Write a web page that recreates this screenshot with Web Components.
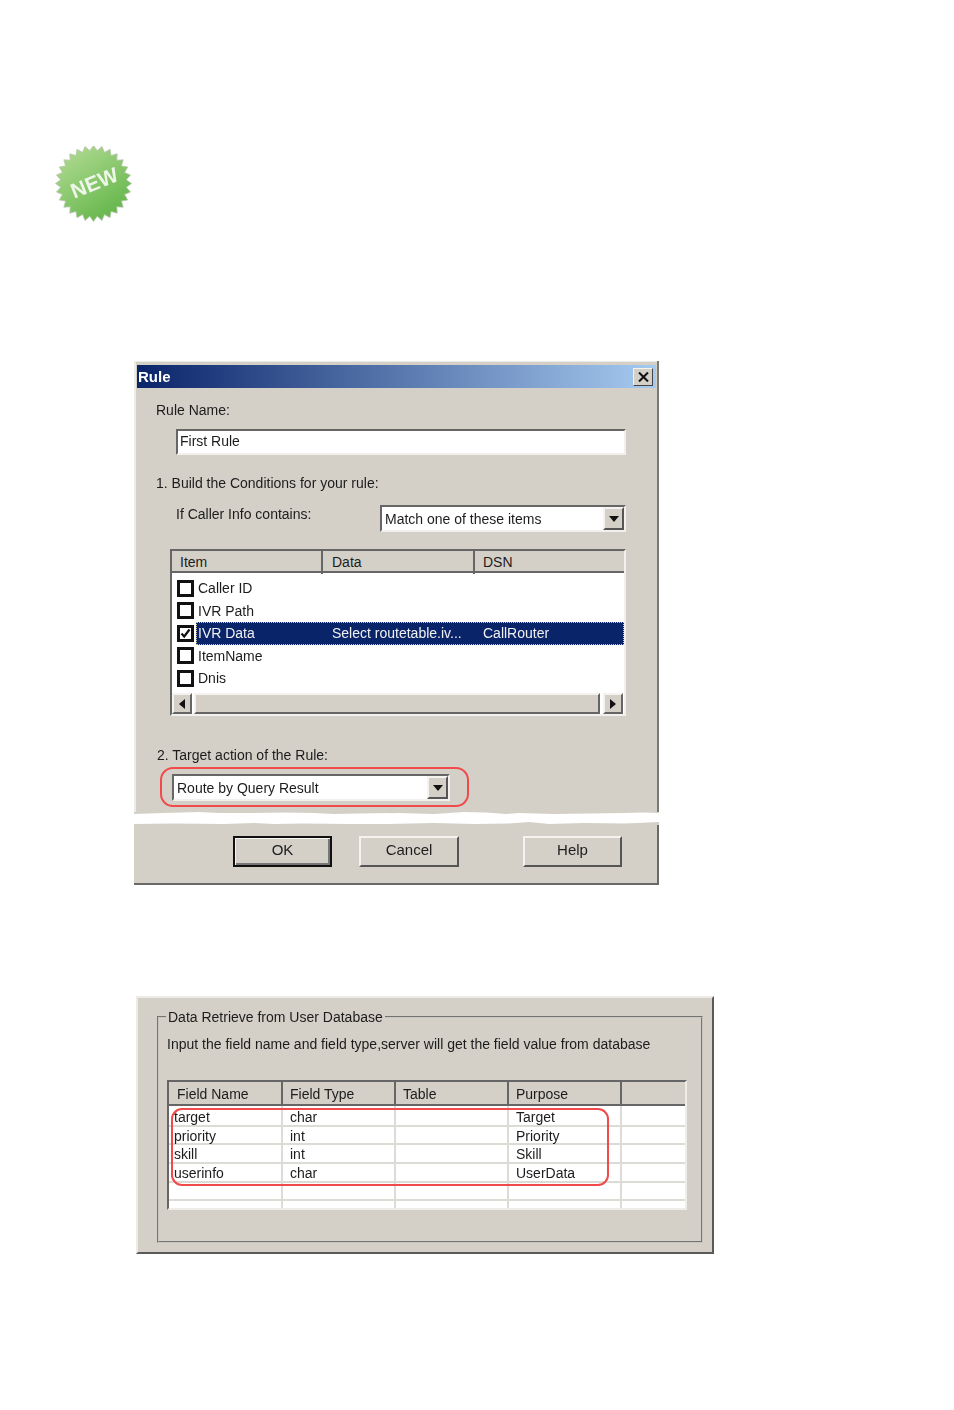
<!DOCTYPE html>
<html>
<head>
<meta charset="utf-8">
<title>Rule</title>
<style>
    html, body { margin: 0; background: #fff; }
    body { display: flex; flex-direction: column; align-items: flex-start; font-family: "Liberation Sans", Arial, sans-serif; }
    new-badge { margin: 146px 0 0 55px; }
    rule-dialog { margin: 139px 0 0 134px; filter: blur(.35px); }
    data-panel { margin: 111px 0 0 136px; filter: blur(.35px); }
</style>
</head>
<body>
<new-badge></new-badge>
<rule-dialog></rule-dialog>
<data-panel></data-panel>

<script>
// shared look of the scanned win32 controls
var base_css = `
    * { box-sizing: border-box; }
    :host { display: block; box-sizing: border-box; font: 14px "Liberation Sans", Arial, sans-serif; color: #1c1c1c; }
`;
var arrow_down = `<svg width="10" height="6" viewBox="0 0 10 6"><path d="M0 0H10L5 6Z" fill="#111"/></svg>`;

// ---- NEW badge
class NewBadge extends HTMLElement {
    constructor(){
        super();
        this.attachShadow({mode:"open"});
    }
    connectedCallback(){
        var pts = [];
        var spikes = 28;
        for (var i = 0; i < spikes * 2; i++){
            var r = i % 2 ? 33 : 38;
            var a = Math.PI * i / spikes;
            pts.push((38.5 + r * Math.cos(a)).toFixed(1) + "," + (37.5 + r * Math.sin(a)).toFixed(1));
        }
        this.shadowRoot.innerHTML = `
        <style>
            :host { display: block; width: 77px; height: 76px; }
            svg { display: block; filter: blur(.7px); }
            text { font: bold 21px "Liberation Sans", Arial, sans-serif; fill: #eef6ea; }
        </style>
        <svg width="77" height="76" viewBox="0 0 77 76">
            <defs>
                <linearGradient id="g" x1="0.2" y1="0.05" x2="0.8" y2="0.95">
                    <stop offset="0" stop-color="#add98f"/>
                    <stop offset="1" stop-color="#62b548"/>
                </linearGradient>
            </defs>
            <polygon points="${pts.join(" ")}" fill="url(#g)" stroke="#b8c4ae" stroke-width=".8"/>
            <text x="39.5" y="44.5" text-anchor="middle" transform="rotate(-22 38.5 37.5)">NEW</text>
        </svg>`;
    }
}

// ---- sunken text box
class EditBox extends HTMLElement {
    constructor(){
        super();
        this.attachShadow({mode:"open"});
        this.shadowRoot.innerHTML = `
        <style>
            ${base_css}
            :host { height: 26px; background: #fff; border: 2px solid; border-color: #666 #f1f0ec #f1f0ec #666; padding-left: 2px; line-height: 21px; }
        </style>
        <slot></slot>`;
    }
}

// ---- drop down
class ComboBox extends HTMLElement {
    constructor(){
        super();
        this.attachShadow({mode:"open"});
        this.shadowRoot.innerHTML = `
        <style>
            ${base_css}
            :host { height: 27px; background: #fff; border: 2px solid; border-color: #666 #f1f0ec #f1f0ec #666; }
            .in { height: 100%; display: flex; justify-content: space-between; padding-left: 3px; line-height: 24px; }
            .btn { width: 21px; height: 100%; background: #d4d0c8; border: 2px solid; border-color: #f4f3ef #555 #555 #f4f3ef; display: flex; align-items: center; justify-content: center; }
        </style>
        <div class="in"><span><slot></slot></span><div class="btn">${arrow_down}</div></div>`;
    }
}

// ---- push button
class PushButton extends HTMLElement {
    constructor(){
        super();
        this.attachShadow({mode:"open"});
        this.shadowRoot.innerHTML = `
        <style>
            ${base_css}
            :host { height: 31px; background: #d4d0c8; border: 2px solid; border-color: #f4f3ef #555 #555 #f4f3ef; text-align: center; line-height: 24px; font-size: 15px; }
            :host([default]) { border-color: #111; box-shadow: inset 1px 1px 0 #f4f3ef, inset -2px -2px 0 #777; }
        </style>
        <slot></slot>`;
    }
}

// ---- list view row with checkbox
class CheckRow extends HTMLElement {
    constructor(){
        super();
        this.attachShadow({mode:"open"});
    }
    connectedCallback(){
        var on = this.hasAttribute("checked");
        this.shadowRoot.innerHTML = `
        <style>
            ${base_css}
            :host { height: 22.5px; display: grid; grid-template-columns: 23px 133px 151px 1fr; align-items: center; line-height: 22px; padding-left: 4px; }
            .box { width: 17px; height: 17px; border: 3px solid #111; background: #fff; margin-left: 1px; display: block; }
            .box svg { display: block; }
            .label { margin-left: -1px; }
            .sel { position: absolute; left: 24px; right: 0; top: 0; bottom: 0; background: #0a246a; border: 1px dotted #d8c890; }
            :host([selected]) { position: relative; color: #f0f0f0; }
            span { position: relative; }
        </style>
        ${this.hasAttribute("selected") ? '<div class="sel"></div>' : ''}
        <span class="box">${on ? '<svg width="11" height="11" viewBox="0 0 11 11"><path d="M1.5 5.5L4.2 8.5L9.5 1.5" fill="none" stroke="#111" stroke-width="2.2"/></svg>' : ''}</span>
        <span class="label">${this.getAttribute("item")}</span>
        <span>${this.getAttribute("data") || ""}</span>
        <span>${this.getAttribute("dsn") || ""}</span>`;
    }
}

// ---- horizontal scroll bar
class ScrollBar extends HTMLElement {
    constructor(){
        super();
        this.attachShadow({mode:"open"});
        this.shadowRoot.innerHTML = `
        <style>
            ${base_css}
            :host { height: 21px; display: flex; justify-content: space-between; gap: 2px; padding: 0 1px 0 0; }
            div { background: #d4d0c8; border: 2px solid; border-color: #f4f3ef #666 #666 #f4f3ef; display: flex; align-items: center; justify-content: center; }
            .b { width: 20px; flex: none; }
            .t { flex: 1; margin-right: 1px; }
        </style>
        <div class="b"><svg width="6" height="10" viewBox="0 0 6 10"><path d="M6 0V10L0 5Z" fill="#111"/></svg></div>
        <div class="t"></div>
        <div class="b"><svg width="6" height="10" viewBox="0 0 6 10"><path d="M0 0V10L6 5Z" fill="#111"/></svg></div>`;
    }
}

// ---- the checkbox list
class RuleList extends HTMLElement {
    constructor(){
        super();
        this.attachShadow({mode:"open"});
        this.shadowRoot.innerHTML = `
        <style>
            ${base_css}
            :host { height: 167px; border: 2px solid; border-color: #666 #f1f0ec #f1f0ec #666; background: #fff; display: flex; flex-direction: column; }
            .head { height: 22px; flex: none; display: grid; grid-template-columns: 151px 152px 1fr; background: #d4d0c8; border-bottom: 2px solid #666; line-height: 23px; }
            .head div { padding-left: 8px; border-right: 2px solid #666; }
            .head div:nth-child(2) { padding-left: 9px; }
            .head div:last-child { border-right: 0; }
            .rows { flex: 1; padding-top: 4px; }
        </style>
        <div class="head"><div>Item</div><div>Data</div><div>DSN</div></div>
        <div class="rows"><slot></slot></div>
        <scroll-bar></scroll-bar>`;
    }
}

// ---- the torn edge between the two halves of the dialog
class TornEdge extends HTMLElement {
    constructor(){
        super();
        this.attachShadow({mode:"open"});
        this.shadowRoot.innerHTML = `
        <style>:host { display: block; height: 13px; } svg { display: block; }</style>
        <svg width="525" height="13" viewBox="0 0 525 13">
            <path fill="#d4d0c8" d="M0 0H525V1L510 .5L490 1L455 1.5L420 2L385 1L372 2L352 .5L330 0L300 2L265 1L225 1.5L200 2L180 1L150 .5L120 1L85 1L65 0L30 1L0 2Z"/>
            <path fill="#d4d0c8" d="M0 13V12L40 11.5L90 12L120 11L140 12L170 11.5L215 12L250 12L300 11L340 12L375 11.5L395 10L415 12L450 11L490 11.5L525 10V13Z"/>
        </svg>`;
    }
}

// ---- Rule dialog
class RuleDialog extends HTMLElement {
    constructor(){
        super();
        this.attachShadow({mode:"open"});
        this.shadowRoot.innerHTML = `
        <style>
            ${base_css}
            :host { width: 525px; }
            .top { height: 451px; background: #d4d0c8; border: solid #7a7a78; border-width: 0 2px 0 0; box-shadow: inset 2px 1px 0 #ecebe6; padding: 4px 0 0 3px; }
            .title { height: 23px; margin-right: 1px; background: linear-gradient(90deg, #0a246a, #a6caf0); color: #fff; font-weight: bold; font-size: 15px; line-height: 23px; padding-left: 1px; display: flex; justify-content: space-between; }
            .close { width: 20px; height: 18px; margin: 3px 3px 0 0; background: #d4d0c8; border: 1px solid; border-color: #f4f3ef #444 #444 #f4f3ef; display: flex; align-items: center; justify-content: center; }
            .close svg { display: block; }
            .t1 { line-height: 16px; margin: 14px 0 0 19px; }
            edit-box { margin: 11px 0 0 39px; width: 450px; }
            .t2 { line-height: 16px; margin: 20px 0 0 19px; }
            .line { display: flex; margin: 14px 0 0 39px; }
            .line span { width: 204px; line-height: 16px; margin-top: 1px; flex: none; }
            .line combo-box { width: 246px; }
            rule-list { margin: 17px 0 0 33px; width: 456px; }
            .t3 { line-height: 16px; margin: 31px 0 0 20px; }
            .ring { width: 309px; height: 40px; margin: 4px 0 0 23px; border: 2px solid #f04a4a; border-radius: 13px; padding: 5px 0 0 10px; }
            .ring combo-box { width: 278px; }
            .bottom { height: 60px; background: #d4d0c8; border: solid #6a6a68; border-width: 0 2px 2px 0; display: flex; padding-top: 11px; }
            push-button { width: 99px; }
            .ok { margin-left: 99px; }
            .cancel { margin-left: 27px; width: 100px; }
            .help { margin-left: 64px; }
        </style>
        <div class="top">
            <div class="title">
                <span>Rule</span>
                <div class="close"><svg width="11" height="10" viewBox="0 0 11 10"><path d="M1 0.5L10 9.5M10 0.5L1 9.5" stroke="#111" stroke-width="2"/></svg></div>
            </div>
            <div class="t1">Rule Name:</div>
            <edit-box>First Rule</edit-box>
            <div class="t2">1. Build the Conditions for your rule:</div>
            <div class="line"><span>If Caller Info contains:</span><combo-box>Match one of these items</combo-box></div>
            <rule-list>
                <check-row item="Caller ID"></check-row>
                <check-row item="IVR Path"></check-row>
                <check-row item="IVR Data" data="Select routetable.iv..." dsn="CallRouter" checked selected></check-row>
                <check-row item="ItemName"></check-row>
                <check-row item="Dnis"></check-row>
            </rule-list>
            <div class="t3">2. Target action of the Rule:</div>
            <div class="ring"><combo-box>Route by Query Result</combo-box></div>
        </div>
        <torn-edge></torn-edge>
        <div class="bottom">
            <push-button class="ok" default>OK</push-button>
            <push-button class="cancel">Cancel</push-button>
            <push-button class="help">Help</push-button>
        </div>`;
    }
}

// ---- grid of the database panel
class FieldGrid extends HTMLElement {
    constructor(){
        super();
        this.attachShadow({mode:"open"});
    }
    connectedCallback(){
        var data = [
            ["target", "char", "", "Target", ""],
            ["priority", "int", "", "Priority", ""],
            ["skill", "int", "", "Skill", ""],
            ["userinfo", "char", "", "UserData", ""],
            ["", "", "", "", ""],
            ["", "", "", "", ""]
        ];
        var cols = "114px 113px 113px 113px 1fr";
        var rows = data.map(function(r){
            return `<div class="row">` + r.map(function(c){ return `<div>${c}</div>`; }).join("") + `</div>`;
        }).join("");
        this.shadowRoot.innerHTML = `
        <style>
            ${base_css}
            :host { position: relative; height: 130px; background: #fff; border: 2px solid; border-color: #666 #eeede8 #eeede8 #666; overflow: hidden; }
            .head, .row { display: grid; grid-template-columns: ${cols}; }
            .head { height: 24px; background: #d4d0c8; border-bottom: 2px solid #666; line-height: 25px; }
            .head div { padding-left: 7px; border-right: 2px solid #666; }
            .head div:first-child { padding-left: 8px; }
            .head div:last-child { border-right: 0; }
            .row { height: 18.7px; line-height: 18px; border-bottom: 2px solid #dddbd6; }
            .row:first-child { height: 20.7px; }
            .row:first-child div { padding-top: 2px; }
            .row div { padding-left: 7px; border-right: 2px solid #dddbd6; }
            .row div:first-child { padding-left: 5px; }
            .row div:last-child { border-right: 0; }
            .ring { position: absolute; left: 2px; top: 26px; width: 438px; height: 78px; border: 2px solid #f04a4a; border-radius: 11px; }
        </style>
        <div class="head"><div>Field Name</div><div>Field Type</div><div>Table</div><div>Purpose</div><div></div></div>
        <div class="rows">${rows}</div>
        <div class="ring"></div>`;
    }
}

// ---- Data Retrieve panel
class DataPanel extends HTMLElement {
    constructor(){
        super();
        this.attachShadow({mode:"open"});
        this.shadowRoot.innerHTML = `
        <style>
            ${base_css}
            :host { width: 578px; height: 258px; background: #d4d0c8; border: 2px solid; border-color: #ecebe6 #5a5a58 #5a5a58 #ecebe6; padding: 11px 0 0 19px; }
            fieldset { width: 546px; height: 234px; margin: 0; padding: 0 8px; border: 2px groove #c8c6c0; }
            legend { padding: 0 2px; margin-left: -1px; line-height: 16px; }
            .desc { line-height: 16px; margin-top: 11px; }
            field-grid { margin-top: 28px; width: 520px; }
        </style>
        <fieldset>
            <legend>Data Retrieve from User Database</legend>
            <div class="desc">Input the field name and field type,server will get the field value from database</div>
            <field-grid></field-grid>
        </fieldset>`;
    }
}

customElements.define("new-badge", NewBadge);
customElements.define("edit-box", EditBox);
customElements.define("combo-box", ComboBox);
customElements.define("push-button", PushButton);
customElements.define("check-row", CheckRow);
customElements.define("scroll-bar", ScrollBar);
customElements.define("rule-list", RuleList);
customElements.define("torn-edge", TornEdge);
customElements.define("rule-dialog", RuleDialog);
customElements.define("field-grid", FieldGrid);
customElements.define("data-panel", DataPanel);
</script>
</body>
</html>
